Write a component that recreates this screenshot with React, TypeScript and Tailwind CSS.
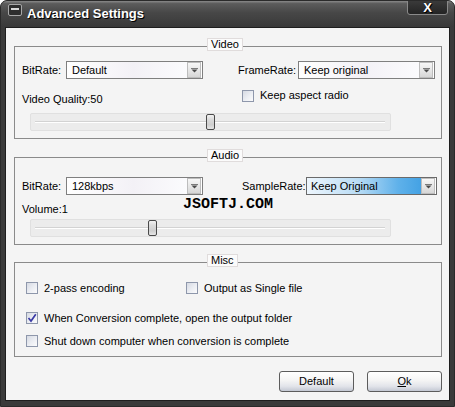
import React from "react";

function Arrow() {
  return (
    <div className="w-[14px] h-[16px] mr-[1px] border border-[#bdbdbd] bg-[linear-gradient(to_bottom,#f7f7f7,#e4e4e4_60%,#d6d6d6)] flex items-center justify-center shrink-0">
      <svg width="7" height="5" viewBox="0 0 7 5">
        <rect x="0" y="0" width="7" height="1" fill="#7a7a7a" />
        <polygon points="0.5,1.5 6.5,1.5 3.5,4.5" fill="#4a4a4a" />
      </svg>
    </div>
  );
}

function Combo({ value, w, hl }: { value: string; w: string; hl?: boolean }) {
  return (
    <div className={`${w} h-[18px] border ${hl ? "border-[#6a6a6a]" : "border-[#7f7f7f]"} bg-white flex items-center shrink-0`}>
      <div
        className={`flex-1 h-full flex items-center ${
          hl
            ? "pl-[4px] bg-[linear-gradient(to_right,#eef6fd_0%,#b9dcf5_45%,#5fb1ea_80%,#44a2e4_100%)]"
            : "pl-[5px] bg-[linear-gradient(to_right,#ffffff_0%,#f3f1f6_55%,#fbfbfd_100%)]"
        }`}
      >
        {value}
      </div>
      <Arrow />
    </div>
  );
}

function Check({ checked }: { checked?: boolean }) {
  return (
    <span className="w-[12px] h-[12px] border border-[#8e97ab] bg-[linear-gradient(135deg,#d6dae3_0%,#eceef3_55%,#fbfbfc_100%)] shrink-0 flex items-center justify-center">
      {checked && (
        <svg width="10" height="10" viewBox="0 0 10 10">
          <path d="M1.5 5 L4 8 L8.8 1.2" stroke="#3b3ba6" strokeWidth="1.7" fill="none" />
        </svg>
      )}
    </span>
  );
}

function Slider({ thumb }: { thumb: string }) {
  return (
    <div className="relative ml-[15px] w-[361px] h-[18px] bg-[#ececec] border border-[#e0e0e0] rounded-[2px]">
      <div className="absolute left-[4px] right-[5px] top-[7px] h-[1px] bg-[#d3d3d3]" />
      <div className="absolute left-[4px] right-[5px] top-[8px] h-[1px] bg-white" />
      <div
        className={`absolute top-0 ${thumb} w-[9px] h-[16px] border border-[#4a4a4a] rounded-[2px] bg-[linear-gradient(to_bottom,#f2f2f2_0%,#dcdcdc_30%,#cfcfcf_70%,#e6e6e6_100%)]`}
      />
    </div>
  );
}

function Legend({ text }: { text: string }) {
  return (
    <div className="absolute top-[-9px] left-[192px] h-[13px] px-[3px] border border-[#e0dcdc] bg-[#fbfbfb] leading-[11px] text-[11px] text-black">
      {text}
    </div>
  );
}

export default function App() {
  return (
    <div className="w-[455px] h-[407px] overflow-hidden rounded-t-[7px] bg-[#3a3a3a] border border-[#2a2a2a] flex flex-col font-['Liberation_Sans',Arial,sans-serif] text-[11px] leading-[13px] text-black select-none">
      {/* Title bar */}
      <div className="h-[26px] shrink-0 flex items-start bg-[linear-gradient(to_bottom,#8a8a8a_0%,#5c5c5c_10%,#474747_45%,#393939_100%)]">
        <div className="ml-[7px] mt-[3px] w-[14px] h-[12px] border border-[#a8a8a8] rounded-[2px] bg-[#2e2e2e] flex justify-center">
          <div className="mt-[3px] w-[8px] h-[2px] bg-[#d8d8d8]" />
        </div>
        <div className="ml-[5px] mt-[5px] text-[13px] leading-[15px] font-bold text-white [text-shadow:1px_1px_0_#000]">
          Advanced Settings
        </div>
        <div className="ml-auto mr-[6px] w-[41px] h-[15px] -mt-[1px] border border-[#8a8a8a] rounded-b-[3px] bg-[linear-gradient(to_bottom,#3a3a3a,#242424)] flex items-center justify-center">
          <span className="text-[13px] leading-[13px] font-bold text-white [text-shadow:0_0_1px_#000,1px_1px_0_#000]">X</span>
        </div>
      </div>

      {/* Body */}
      <div className="flex-1 ml-[4px] mr-[4px] mb-[5px] border border-[#1e1e1e] bg-[#f4f4f4] flex flex-col">
        {/* Video */}
        <div className="relative mt-[18px] ml-[8px] mr-[7px] border border-[#8a8a8a] pt-[14px] pb-[7px]">
          <Legend text="Video" />
          <div className="flex items-center pl-[7px]">
            <span className="w-[44px]">BitRate:</span>
            <Combo value="Default" w="w-[137px]" />
            <span className="ml-[35px] w-[60px]">FrameRate:</span>
            <Combo value="Keep original" w="w-[137px]" />
          </div>
          <div className="flex items-start pl-[7px] mt-[10px] h-[17px]">
            <span className="w-[220px] mt-[4px]">Video Quality:50</span>
            <div className="flex items-center gap-[6px]">
              <Check />
              <span>Keep aspect radio</span>
            </div>
          </div>
          <div className="mt-[7px]">
            <Slider thumb="left-[175px]" />
          </div>
        </div>

        {/* Audio */}
        <div className="relative mt-[18px] ml-[8px] mr-[7px] border border-[#8a8a8a] pt-[19px] pb-[7px]">
          <Legend text="Audio" />
          <div className="flex items-center pl-[7px]">
            <span className="w-[44px]">BitRate:</span>
            <Combo value="128kbps" w="w-[137px]" />
            <span className="ml-[39px] w-[64px]">SampleRate:</span>
            <Combo value="Keep Original" w="w-[131px]" hl />
          </div>
          <div className="pl-[7px] mt-[8px] h-[13px]">Volume:1</div>
          <div className="mt-[3px]">
            <Slider thumb="left-[117px]" />
          </div>
          <div className="absolute left-[168px] top-[39px] font-['Liberation_Mono',monospace] font-bold text-[15px] leading-[15px] text-black">
            JSOFTJ.COM
          </div>
        </div>

        {/* Misc */}
        <div className="relative mt-[17px] ml-[8px] mr-[7px] border border-[#8a8a8a] pt-[19px] pb-[9px] pl-[11px]">
          <Legend text="Misc" />
          <div className="flex items-center h-[12px]">
            <div className="w-[160px] flex items-center gap-[6px]">
              <Check />
              <span>2-pass encoding</span>
            </div>
            <div className="flex items-center gap-[6px]">
              <Check />
              <span>Output as Single file</span>
            </div>
          </div>
          <div className="flex items-center gap-[6px] mt-[18px] h-[12px]">
            <Check checked />
            <span>When Conversion complete, open the output folder</span>
          </div>
          <div className="flex items-center gap-[6px] mt-[11px] h-[12px]">
            <Check />
            <span>Shut down computer when conversion is complete</span>
          </div>
        </div>

        {/* Buttons */}
        <div className="flex justify-end gap-[13px] mt-[14px] mr-[7px]">
          <button className="w-[75px] h-[21px] border border-[#5c5c5c] rounded-[3px] bg-[linear-gradient(to_bottom,#ffffff_0%,#f4f4f4_45%,#e2e4ea_75%,#c3c8d3_100%)] text-[11px] leading-[13px]">
            Default
          </button>
          <button className="w-[75px] h-[21px] border border-[#5c5c5c] rounded-[3px] bg-[linear-gradient(to_bottom,#ffffff_0%,#f4f4f4_45%,#e2e4ea_75%,#c3c8d3_100%)] text-[11px] leading-[13px]">
            <span className="underline">O</span>k
          </button>
        </div>
      </div>
    </div>
  );
}
